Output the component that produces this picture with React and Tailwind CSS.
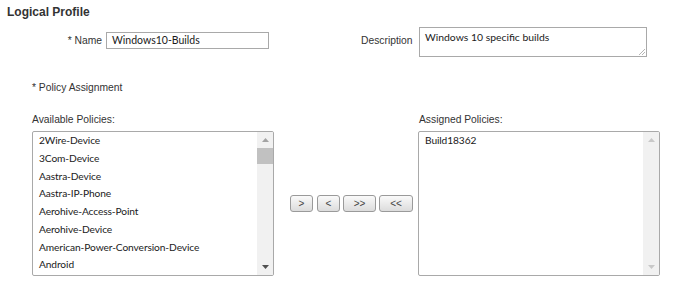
import React from "react";

const available = [
  "2Wire-Device",
  "3Com-Device",
  "Aastra-Device",
  "Aastra-IP-Phone",
  "Aerohive-Access-Point",
  "Aerohive-Device",
  "American-Power-Conversion-Device",
  "Android",
];

const assigned = ["Build18362"];

function Scrollbar({ active }) {
  return (
    <div className="flex w-[16px] flex-col bg-[#f1f1f1]">
      <div className="flex h-[16px] items-center justify-center">
        <svg width="7" height="4" viewBox="0 0 7 4">
          <path d="M0 4 L3.5 0 L7 4 Z" fill={active ? "#a3a3a3" : "#c8c8c8"} />
        </svg>
      </div>
      <div className="flex-1">
        {active && <div className="h-[16px] w-full bg-[#c1c1c1]" />}
      </div>
      <div className="flex h-[16px] items-center justify-center">
        <svg width="7" height="4" viewBox="0 0 7 4">
          <path d="M0 0 L7 0 L3.5 4 Z" fill={active ? "#505050" : "#c8c8c8"} />
        </svg>
      </div>
    </div>
  );
}

function ListBox({ items, active }) {
  return (
    <div className="flex h-[145px] w-[242px] overflow-hidden rounded-[2px] border border-[#a9a9a9] bg-white">
      <div className="flex-1 overflow-hidden pl-[6px] font-['Lato'] text-[10.2px] leading-[17.75px] tracking-[-0.1px] text-[#1a1a1a]">
        {items.map((it) => (
          <div key={it} className="whitespace-nowrap">
            {it}
          </div>
        ))}
      </div>
      <Scrollbar active={active} />
    </div>
  );
}

function MoveButton({ children, w }) {
  return (
    <button
      className={`flex h-[17px] ${w} items-center justify-center rounded-[3px] border border-[#9a9a9a] bg-gradient-to-b from-[#fafafa] to-[#dcdcdc] font-['Liberation_Sans'] text-[10px] leading-none text-[#444]`}
    >
      {children}
    </button>
  );
}

export default function App() {
  return (
    <div className="h-[285px] w-[676px] bg-white font-['Liberation_Sans'] text-[10.3px] text-[#333]">
      <div className="px-[7px] pt-[5px] text-[12px] font-bold leading-[14px]">Logical Profile</div>

      <div className="mt-[8px] flex items-start">
        <div className="flex items-center pt-[5px]">
          <span className="w-[102px] text-right">* Name</span>
          <div className="ml-[4px] flex h-[17px] w-[163px] items-center border border-[#a9a9a9] pl-[5px] font-['Lato'] text-[10.5px] text-[#1a1a1a]">
            Windows10-Builds
          </div>
        </div>
        <div className="ml-[92px] flex items-start">
          <span className="mt-[6px] w-[58px]">Description</span>
          <div className="relative h-[30px] w-[228px] border border-[#a9a9a9] pl-[5px] pt-[2px] font-['Lato'] text-[10.4px] leading-[14px] text-[#1a1a1a]">
            Windows 10 specific builds
            <svg className="absolute bottom-[1px] right-[1px]" width="7" height="7" viewBox="0 0 7 7">
              <path d="M7 1 L1 7 M7 4 L4 7" stroke="#b5b5b5" strokeWidth="1" />
            </svg>
          </div>
        </div>
      </div>

      <div className="mt-[25px] pl-[32px] leading-[12px]">* Policy Assignment</div>

      <div className="mt-[20px] flex pl-[32px]">
        <div className="w-[387px] leading-[12px]">Available Policies:</div>
        <div className="leading-[12px]">Assigned Policies:</div>
      </div>

      <div className="mt-[5px] flex items-center pl-[32px]">
        <ListBox items={available} active />
        <div className="ml-[16px] flex">
          <MoveButton w="w-[23px]">&gt;</MoveButton>
          <div className="ml-[4px]">
            <MoveButton w="w-[23px]">&lt;</MoveButton>
          </div>
          <div className="ml-[3px]">
            <MoveButton w="w-[33px]">&gt;&gt;</MoveButton>
          </div>
          <div className="ml-[3px]">
            <MoveButton w="w-[34px]">&lt;&lt;</MoveButton>
          </div>
        </div>
        <div className="ml-[5px]">
          <ListBox items={assigned} />
        </div>
      </div>
    </div>
  );
}
